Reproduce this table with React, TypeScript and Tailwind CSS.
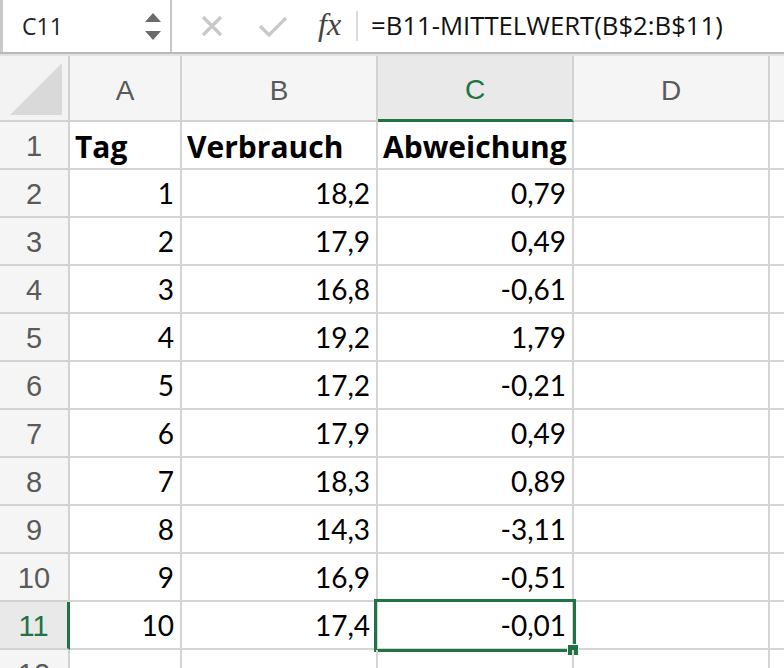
import React from "react";

const rows: [string, string, string, string][] = [
  ["1", "Tag", "Verbrauch", "Abweichung"],
  ["2", "1", "18,2", "0,79"],
  ["3", "2", "17,9", "0,49"],
  ["4", "3", "16,8", "-0,61"],
  ["5", "4", "19,2", "1,79"],
  ["6", "5", "17,2", "-0,21"],
  ["7", "6", "17,9", "0,49"],
  ["8", "7", "18,3", "0,89"],
  ["9", "8", "14,3", "-3,11"],
  ["10", "9", "16,9", "-0,51"],
  ["11", "10", "17,4", "-0,01"],
  ["12", "", "", ""],
];

const cellFont = { fontFamily: "Lato, 'Liberation Sans', sans-serif" };
const boldFont = { fontFamily: "'Open Sans', Lato, sans-serif" };

export default function App() {
  return (
    <div className="w-[784px] h-[668px] overflow-hidden bg-white relative">
      {/* formula bar */}
      <div className="flex h-[52px] items-stretch bg-white">
        <div className="w-[3px] bg-[#c9c9c9]" />
        <div className="w-[169px] flex items-center justify-between pl-[19px] pr-[9px] bg-white border-r-2 border-[#c8c8c8]">
          <span className="text-[23px] text-[#222]" style={{ fontFamily: "'Open Sans', sans-serif" }}>C11</span>
          <div className="flex flex-col items-center gap-[9px]">
            <svg width="16" height="9" viewBox="0 0 16 9"><path d="M8 0 L16 9 L0 9 Z" fill="#6b6b6b" /></svg>
            <svg width="16" height="9" viewBox="0 0 16 9"><path d="M0 0 L16 0 L8 9 Z" fill="#6b6b6b" /></svg>
          </div>
        </div>
        <div className="flex items-center pl-[28px]">
          <svg width="24" height="24" viewBox="0 0 24 24"><path d="M3 3 L21 21 M21 3 L3 21" stroke="#c8c8c8" strokeWidth="3.2" /></svg>
          <svg className="ml-[34px]" width="30" height="24" viewBox="0 0 30 24"><path d="M2 12 L11 21 L28 4" stroke="#c8c8c8" strokeWidth="3.2" fill="none" /></svg>
          <span className="ml-[30px] text-[32px] italic text-[#444] leading-none pb-[4px]" style={{ fontFamily: "'Liberation Serif', serif" }}>fx</span>
          <div className="ml-[15px] w-[2px] h-[30px] bg-[#dcdcdc]" />
          <span className="ml-[13px] text-[25.7px] text-[#111]" style={{ fontFamily: "'Open Sans', sans-serif" }}>=B11-MITTELWERT(B$2:B$11)</span>
        </div>
      </div>
      <div className="h-[2px] bg-[#b9b9b9]" />
      <div className="h-[2px] bg-[#e2e2e2]" />
      {/* grid */}
      <div className="grid grid-cols-[70px_112px_196px_196px_196px_100px]">
        {/* header row */}
        <div className="h-[66px] bg-[#f3f3f3] border-r-2 border-b-2 border-[#d2d2d2] relative flex items-end justify-end p-[4px]">
          <svg width="52" height="52" viewBox="0 0 52 52" className="mb-[1px] mr-[2px]"><path d="M52 0 L52 52 L0 52 Z" fill="#d9d9d9" /></svg>
        </div>
        {["A", "B", "C", "D", ""].map((l) => (
          <div
            key={l}
            className={
              "h-[66px] border-r-2 flex items-center justify-center pt-[5px] text-[28px] " +
              (l === "C"
                ? "bg-[#e9e9e9] border-b-[3px] border-b-[#217346] border-r-[#d2d2d2] text-[#217346]"
                : "bg-[#f5f5f5] border-b-2 border-[#d2d2d2] text-[#5a5a5a]")
            }
            style={{ fontFamily: "'Liberation Sans', Arial, sans-serif" }}
          >
            {l}
          </div>
        ))}
        {rows.map((r) => {
          const sel = r[0] === "11";
          const bold = r[0] === "1";
          return (
            <React.Fragment key={r[0]}>
              <div
                className={
                  "h-[48px] border-b-2 border-[#d2d2d2] flex items-center justify-center pt-[3px] text-[29px] " +
                  (sel
                    ? "bg-[#e9e9e9] border-r-[3px] border-r-[#217346] text-[#217346]"
                    : "bg-[#f5f5f5] border-r-2 text-[#5a5a5a]")
                }
                style={{ fontFamily: "'Liberation Sans', Arial, sans-serif" }}
              >
                {r[0]}
              </div>
              {[r[1], r[2], r[3]].map((v, i) => (
                <div
                  key={i}
                  className={
                    "h-[48px] border-r-2 border-b-2 border-[#d4d4d4] flex items-center text-black relative " +
                    (bold ? "justify-start font-bold text-[30px] pl-[5px] pt-[2px] whitespace-nowrap" : "justify-end text-[28px] px-[6px]")
                  }
                  style={bold ? boldFont : cellFont}
                >
                  {v}
                  {sel && i === 2 && (
                    <>
                      <div className="absolute left-[-4px] top-[-3px] right-[-4px] bottom-[-4px] border-[3px] border-[#217346]" />
                      <div className="absolute right-[-7px] bottom-[-8px] w-[12px] h-[12px] bg-[#217346] border border-white" />
                    </>
                  )}
                </div>
              ))}
              <div className="h-[48px] border-r-2 border-b-2 border-[#d4d4d4]" />
              <div className="h-[48px] border-b-2 border-[#d4d4d4]" />
            </React.Fragment>
          );
        })}
      </div>
    </div>
  );
}
